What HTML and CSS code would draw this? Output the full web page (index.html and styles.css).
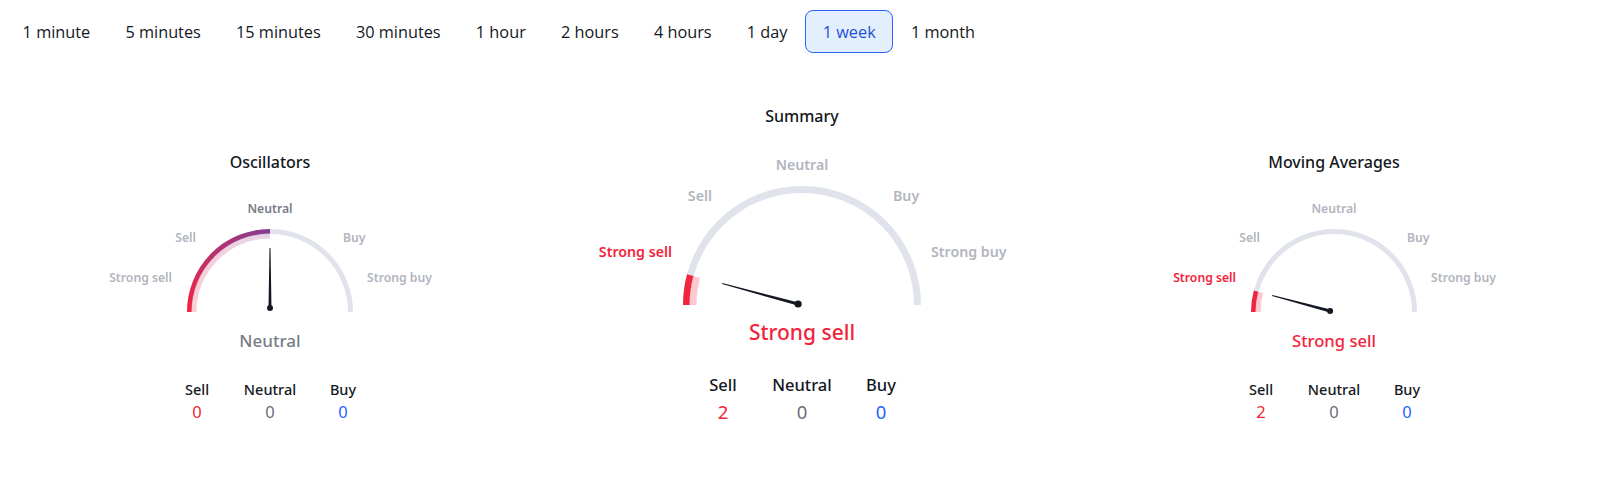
FILE: index.html
```html
<!DOCTYPE html>
<html lang="en">
<head>
<meta charset="utf-8">
<title>Technicals</title>
<link rel="stylesheet" href="styles.css">
</head>
<body>
<div class="tabs">
  <button class="tab">1 minute</button>
  <button class="tab">5 minutes</button>
  <button class="tab">15 minutes</button>
  <button class="tab">30 minutes</button>
  <button class="tab">1 hour</button>
  <button class="tab">2 hours</button>
  <button class="tab">4 hours</button>
  <button class="tab">1 day</button>
  <button class="tab active">1 week</button>
  <button class="tab">1 month</button>
</div>

<div class="panels">
  <section class="panel panel-side">
    <h3 class="title">Oscillators</h3>
    <svg class="gauge gauge-sm" width="360" height="118" viewBox="0 0 360 118">
      <defs>
        <linearGradient id="oscGrad" gradientUnits="userSpaceOnUse" x1="97" y1="113" x2="180" y2="30">
          <stop offset="0" stop-color="#f5233f"/>
          <stop offset="0.5" stop-color="#bd2f6a"/>
          <stop offset="1" stop-color="#853e95"/>
        </linearGradient>
      </defs>
      <path class="track-sm" d="M99.5 113 A80.5 80.5 0 0 1 260.5 113"/>
      <path d="M99.25 113 A80.75 80.75 0 0 1 180 32.25" fill="none" stroke="url(#oscGrad)" stroke-width="4.5"/>
      <path d="M104 113 A76 76 0 0 1 180 37" fill="none" stroke="url(#oscGrad)" stroke-width="5" stroke-opacity="0.22"/>
      <polygon class="needle" points="178.5,109 181.5,109 180.5,49 179.5,49"/>
      <circle class="needle" cx="180" cy="109" r="3"/>
      <text class="gl gl-active" x="180" y="14" text-anchor="middle">Neutral</text>
      <text class="gl" x="106" y="43" text-anchor="end">Sell</text>
      <text class="gl" x="253" y="43">Buy</text>
      <text class="gl" x="82" y="83" text-anchor="end">Strong sell</text>
      <text class="gl" x="277" y="83">Strong buy</text>
    </svg>
    <div class="result result-sm neutral">Neutral</div>
    <div class="counts counts-sm">
      <div class="count"><span class="count-label">Sell</span><span class="count-val sell">0</span></div>
      <div class="count"><span class="count-label">Neutral</span><span class="count-val neutral">0</span></div>
      <div class="count"><span class="count-label">Buy</span><span class="count-val buy">0</span></div>
    </div>
  </section>

  <section class="panel panel-main">
    <h3 class="title">Summary</h3>
    <svg class="gauge gauge-lg" width="460" height="160" viewBox="0 0 460 160">
      <path class="track-lg" d="M114.5 155 A115.5 115.5 0 0 1 345.5 155"/>
      <path d="M114.25 155 A115.75 115.75 0 0 1 118.19 125.04" fill="none" stroke="#f0263f" stroke-width="6.5"/>
      <path d="M121 155 A109 109 0 0 1 124.71 126.79" fill="none" stroke="#f0263f" stroke-width="7" stroke-opacity="0.25"/>
      <polygon class="needle" points="225.7,155.6 226.5,152.4 150.3,133.1 150.1,134.1"/>
      <circle class="needle" cx="226.1" cy="154" r="3.6"/>
      <text class="gl gl-lg" x="230" y="20" text-anchor="middle">Neutral</text>
      <text class="gl gl-lg" x="140" y="51" text-anchor="end">Sell</text>
      <text class="gl gl-lg" x="321" y="51">Buy</text>
      <text class="gl gl-lg gl-sell" x="100" y="107" text-anchor="end">Strong sell</text>
      <text class="gl gl-lg" x="359" y="107">Strong buy</text>
    </svg>
    <div class="result result-lg sell">Strong sell</div>
    <div class="counts counts-lg">
      <div class="count"><span class="count-label">Sell</span><span class="count-val sell">2</span></div>
      <div class="count"><span class="count-label">Neutral</span><span class="count-val neutral">0</span></div>
      <div class="count"><span class="count-label">Buy</span><span class="count-val buy">0</span></div>
    </div>
  </section>

  <section class="panel panel-side">
    <h3 class="title">Moving Averages</h3>
    <svg class="gauge gauge-sm" width="360" height="118" viewBox="0 0 360 118">
      <path class="track-sm" d="M99.5 113 A80.5 80.5 0 0 1 260.5 113"/>
      <path d="M99.25 113 A80.75 80.75 0 0 1 102 92.1" fill="none" stroke="#f0263f" stroke-width="4.5"/>
      <path d="M104 113 A76 76 0 0 1 106.59 93.33" fill="none" stroke="#f0263f" stroke-width="5" stroke-opacity="0.25"/>
      <polygon class="needle" points="175.7,113.4 176.5,110.6 118.3,95.9 118.1,96.9"/>
      <circle class="needle" cx="176.1" cy="112" r="3"/>
      <text class="gl" x="180" y="14" text-anchor="middle">Neutral</text>
      <text class="gl" x="106" y="43" text-anchor="end">Sell</text>
      <text class="gl" x="253" y="43">Buy</text>
      <text class="gl gl-sell" x="82" y="83" text-anchor="end">Strong sell</text>
      <text class="gl" x="277" y="83">Strong buy</text>
    </svg>
    <div class="result result-sm sell">Strong sell</div>
    <div class="counts counts-sm">
      <div class="count"><span class="count-label">Sell</span><span class="count-val sell">2</span></div>
      <div class="count"><span class="count-label">Neutral</span><span class="count-val neutral">0</span></div>
      <div class="count"><span class="count-label">Buy</span><span class="count-val buy">0</span></div>
    </div>
  </section>
</div>
</body>
</html>
```

FILE: styles.css
```css
* { box-sizing: border-box; }

html, body {
  margin: 0;
  padding: 0;
  background: #ffffff;
  color: #131722;
  font-family: "Noto Sans", "Open Sans", sans-serif;
}

.tabs {
  display: flex;
  padding: 10px 0 0 5px;
}

.tab {
  height: 43px;
  padding: 0 16.6px;
  border: 1px solid transparent;
  border-radius: 8px;
  background: none;
  font-family: "Open Sans", "Noto Sans", sans-serif;
  font-size: 16.3px;
  color: #131722;
  cursor: pointer;
}

.tab.active {
  border-color: #2962ff;
  background: #e3effd;
  color: #1f4fd8;
}

.panels {
  display: grid;
  grid-template-columns: repeat(3, 1fr);
  align-items: start;
  padding-left: 4px;
  margin-top: 50px;
}

.panel {
  display: flex;
  flex-direction: column;
  align-items: center;
}

.panel-side {
  margin-top: 46px;
}

.title {
  margin: 0;
  font-size: 16px;
  font-weight: 500;
  line-height: 26px;
  color: #131722;
}

.gauge { display: block; }

.gauge-sm { margin-top: 24px; }
.gauge-lg { margin-top: 21px; }

.track-sm, .track-lg {
  fill: none;
  stroke: #e0e3eb;
}
.track-sm { stroke-width: 5; }
.track-lg { stroke-width: 7; }

.needle { fill: #131722; }

.gl {
  font-family: "Noto Sans", sans-serif;
  font-size: 12.2px;
  font-weight: 600;
  fill: #b2b5be;
}
.gl-lg { font-size: 14.2px; }
.gl-active { fill: #787b86; }
.gl-sell { fill: #f2243a; }

.result {
  font-weight: 500;
}
.result-sm {
  margin-top: 12px;
  font-size: 17px;
  line-height: 24px;
}
.result-lg {
  margin-top: 8px;
  font-size: 21px;
  line-height: 28px;
}
.panel-side:last-child .result-sm { font-size: 16.6px; }

.result.neutral { color: #787b86; }
.result.sell { color: #f2243a; }

.counts {
  display: flex;
  justify-content: center;
}
.counts-sm { margin-top: 26px; gap: 9px; }
.counts-lg { margin-top: 28px; gap: 9px; }

.count {
  display: flex;
  flex-direction: column;
  align-items: center;
}
.counts-sm .count { width: 64px; }
.counts-lg .count { width: 70px; }

.count-label {
  font-weight: 500;
  color: #131722;
}
.counts-sm .count-label { font-size: 14.5px; line-height: 20px; }
.counts-lg .count-label { font-size: 16.5px; line-height: 22px; }

.count-val { font-weight: 400; }
.counts-sm .count-val { font-size: 16.5px; line-height: 22px; margin-top: 2px; }
.counts-lg .count-val { font-size: 18.5px; line-height: 24px; margin-top: 4px; }

.count-val.sell { color: #f2243a; }
.count-val.neutral { color: #6a6d78; }
.count-val.buy { color: #2962ff; }
```
